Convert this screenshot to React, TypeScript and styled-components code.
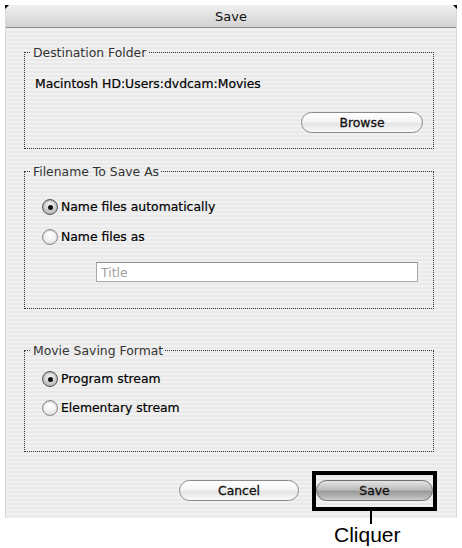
import { createGlobalStyle, styled } from 'styled-components';

const Global = createGlobalStyle`
  html, body {
    margin: 0;
    padding: 0;
    background: #fff;
  }
  body {
    font-family: 'DejaVu Sans', 'Liberation Sans', sans-serif;
    font-size: 12.4px;
    color: #000;
  }
`;

const Page = styled.div`
  position: relative;
  width: 462px;
  height: 548px;
  padding: 5px 5px 0;
  box-sizing: border-box;
`;

const Window = styled.div`
  position: relative;
  width: 452px;
  height: 513px;
  background: repeating-linear-gradient(#f1f1f1 0 2px, #e9e9e9 2px 4px);
  border-left: 1px solid #d8d8d8;
  border-right: 1px solid #d8d8d8;
  box-sizing: border-box;

  &::before,
  &::after {
    content: '';
    position: absolute;
    top: 0;
    width: 0;
    height: 0;
    border-top: 4px solid #000;
  }
  &::before {
    left: -1px;
    border-right: 4px solid transparent;
  }
  &::after {
    right: -1px;
    border-left: 4px solid transparent;
  }
`;

const TitleBar = styled.div`
  height: 22px;
  display: flex;
  align-items: center;
  justify-content: center;
  background: linear-gradient(#f0f0f0, #d2d2d2);
  border-bottom: 1px solid #8c8c8c;
  font-size: 13px;
  color: #111;
`;

const Body = styled.div`
  display: flex;
  flex-direction: column;
  padding: 17px 22px 0 18px;
`;

const Group = styled.fieldset<{ $h: number; $mt?: number }>`
  margin: ${(p) => p.$mt ?? 0}px 0 0;
  padding: 0 10px 0 6px;
  border: 1px dotted #333;
  height: ${(p) => p.$h}px;
  box-sizing: border-box;
  display: flex;
  flex-direction: column;
  min-width: 0;
`;

const Legend = styled.legend`
  padding: 0 2px;
  line-height: 15px;
  color: #333;
`;

const PathText = styled.div`
  padding: 16px 0 0 4px;
  line-height: 16px;
  -webkit-text-stroke: 0.2px #000;
`;

const ButtonRow = styled.div<{ $mt?: number; $pr?: number }>`
  display: flex;
  justify-content: flex-end;
  gap: 17px;
  margin-top: ${(p) => p.$mt ?? 0}px;
  padding-right: ${(p) => p.$pr ?? 0}px;
`;

const AquaButton = styled.button<{ $w: number; $default?: boolean }>`
  width: ${(p) => p.$w}px;
  height: 21px;
  border-radius: 11px;
  border: 1px solid ${(p) => (p.$default ? '#6e6e6e' : '#8a8a8a')};
  background: ${(p) =>
    p.$default
      ? 'linear-gradient(#e4e4e4 0%, #bdbdbd 45%, #9c9c9c 55%, #b6b6b6 85%, #d0d0d0 100%)'
      : 'linear-gradient(#ffffff 0%, #f4f4f4 45%, #e4e4e4 55%, #f2f2f2 85%, #fafafa 100%)'};
  font-family: inherit;
  font-size: 12.4px;
  color: #111;
  padding: 0;
  line-height: 19px;
  -webkit-text-stroke: 0.3px #111;
`;

const RadioList = styled.div<{ $pt: number; $gap: number }>`
  display: flex;
  flex-direction: column;
  gap: ${(p) => p.$gap}px;
  padding: ${(p) => p.$pt}px 0 0 11px;
`;

const RadioRow = styled.label`
  display: flex;
  align-items: center;
  gap: 3px;
  height: 20px;
  line-height: 16px;
  -webkit-text-stroke: 0.2px #000;
`;

const RadioDot = styled.span<{ $on?: boolean }>`
  position: relative;
  width: 16px;
  height: 16px;
  border-radius: 50%;
  box-sizing: border-box;
  border: 1px solid ${(p) => (p.$on ? '#555' : '#8a8a8a')};
  background: ${(p) =>
    p.$on
      ? 'radial-gradient(circle at 50% 35%, #f4f4f4 0%, #c8c8c8 60%, #9a9a9a 100%)'
      : 'radial-gradient(circle at 50% 30%, #ffffff 0%, #f0f0f0 55%, #cfcfcf 100%)'};
  box-shadow: inset 0 1px 1px rgba(0, 0, 0, 0.2);

  &::after {
    content: '';
    display: ${(p) => (p.$on ? 'block' : 'none')};
    position: absolute;
    left: 4.5px;
    top: 4.5px;
    width: 5px;
    height: 5px;
    border-radius: 50%;
    background: #111;
  }
`;

const TitleInput = styled.input`
  margin: 15px 0 0 65px;
  width: 322px;
  height: 20px;
  box-sizing: border-box;
  border: 1px solid #a8a8a8;
  border-top-color: #8a8a8a;
  background: #fff;
  font-family: inherit;
  font-size: 12.4px;
  padding: 0 4px;
  outline: none;

  &::placeholder {
    color: #a0a0a0;
  }
`;

const Highlight = styled.div`
  position: absolute;
  left: 312px;
  top: 471px;
  width: 125px;
  height: 40px;
  box-sizing: border-box;
  border: 4px solid #000;
  pointer-events: none;
`;

const Leader = styled.div`
  position: absolute;
  left: 370px;
  top: 511px;
  width: 2px;
  height: 13px;
  background: #000;
`;

const Callout = styled.div`
  position: absolute;
  left: 334px;
  top: 523px;
  font-family: 'Liberation Sans', Arial, sans-serif;
  font-size: 21px;
  line-height: 24px;
  color: #000;
`;

export default function App() {
  return (
    <>
      <Global />
      <Page>
        <Window>
          <TitleBar>Save</TitleBar>
          <Body>
            <Group $h={104}>
              <Legend>Destination Folder</Legend>
              <PathText>Macintosh HD:Users:dvdcam:Movies</PathText>
              <ButtonRow $mt={20}>
                <AquaButton $w={122}>Browse</AquaButton>
              </ButtonRow>
            </Group>

            <Group $h={145} $mt={15}>
              <Legend>Filename To Save As</Legend>
              <RadioList $pt={18} $gap={10}>
                <RadioRow>
                  <RadioDot $on />
                  Name files automatically
                </RadioRow>
                <RadioRow>
                  <RadioDot />
                  Name files as
                </RadioRow>
              </RadioList>
              <TitleInput placeholder="Title" />
            </Group>

            <Group $h={109} $mt={34}>
              <Legend>Movie Saving Format</Legend>
              <RadioList $pt={11} $gap={9}>
                <RadioRow>
                  <RadioDot $on />
                  Program stream
                </RadioRow>
                <RadioRow>
                  <RadioDot />
                  Elementary stream
                </RadioRow>
              </RadioList>
            </Group>

            <ButtonRow $mt={28} $pr={1}>
              <AquaButton $w={120}>Cancel</AquaButton>
              <AquaButton $w={117} $default>
                Save
              </AquaButton>
            </ButtonRow>
          </Body>
        </Window>
        <Highlight />
        <Leader />
        <Callout>Cliquer</Callout>
      </Page>
    </>
  );
}
